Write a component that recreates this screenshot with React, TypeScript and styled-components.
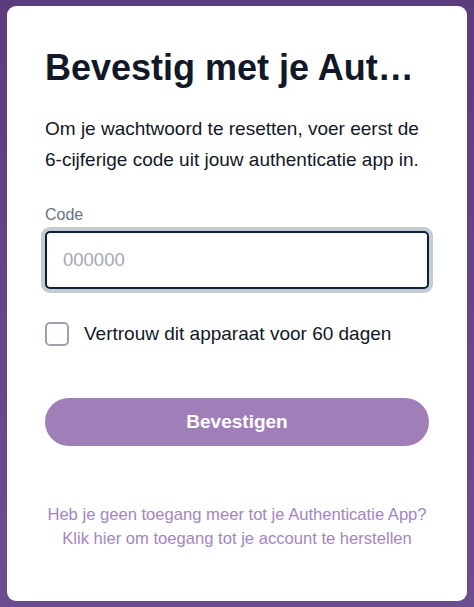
import styled, { createGlobalStyle } from "styled-components";

const GlobalStyle = createGlobalStyle`
  html, body {
    margin: 0;
    padding: 0;
    height: 100%;
  }
  body {
    font-family: "Liberation Sans", Arial, sans-serif;
    background: linear-gradient(180deg, #5c3d7b 0%, #6c4d90 100%);
  }
`;

const Page = styled.div`
  box-sizing: border-box;
  width: 474px;
  height: 607px;
  padding: 6px 7px;
`;

const Card = styled.div`
  box-sizing: border-box;
  height: 100%;
  background: #ffffff;
  border-radius: 9px;
  padding: 42px 38px 0 38px;
  display: flex;
  flex-direction: column;
`;

const Title = styled.h1`
  margin: 0;
  font-size: 36px;
  line-height: 40px;
  font-weight: 700;
  color: #111827;
  white-space: nowrap;
  overflow: hidden;
  text-overflow: ellipsis;
`;

const Intro = styled.p`
  margin: 25px 0 0 0;
  font-size: 19px;
  line-height: 31px;
  color: #111827;
`;

const Field = styled.div`
  display: flex;
  flex-direction: column;
  margin-top: 30px;
`;

const Label = styled.label`
  font-size: 16px;
  line-height: 20px;
  color: #6b7280;
  margin-bottom: 6px;
`;

const Input = styled.input`
  box-sizing: border-box;
  width: 100%;
  height: 58px;
  border: 2px solid #0d1f3c;
  border-radius: 5px;
  box-shadow: 0 0 0 4px #c3cbd3;
  padding: 0 16px;
  font-family: inherit;
  font-size: 18.5px;
  color: #111827;
  outline: none;

  &::placeholder {
    color: #a3a9b2;
  }
`;

const CheckRow = styled.label`
  display: flex;
  align-items: center;
  gap: 15px;
  margin-top: 33px;
  font-size: 19px;
  line-height: 24px;
  color: #111827;
`;

const Box = styled.span`
  box-sizing: border-box;
  width: 24px;
  height: 24px;
  border: 2px solid #9ca3af;
  border-radius: 5px;
  flex-shrink: 0;
`;

const Button = styled.button`
  margin-top: 52px;
  height: 48px;
  width: 100%;
  border: none;
  border-radius: 24px;
  background: #a07fb8;
  color: #ffffff;
  font-family: inherit;
  font-size: 19px;
  font-weight: 700;
  padding: 0;
`;

const Help = styled.a`
  display: block;
  margin-top: 57px;
  text-align: center;
  font-size: 16.6px;
  line-height: 24px;
  color: #a585bf;
  text-decoration: none;
  white-space: nowrap;
`;

export default function App() {
  return (
    <>
      <GlobalStyle />
      <Page>
        <Card>
          <Title>Bevestig met je Authenticatie App</Title>
          <Intro>
            Om je wachtwoord te resetten, voer eerst de 6-cijferige code uit
            jouw authenticatie app in.
          </Intro>
          <Field>
            <Label>Code</Label>
            <Input placeholder="000000" />
          </Field>
          <CheckRow>
            <Box />
            Vertrouw dit apparaat voor 60 dagen
          </CheckRow>
          <Button>Bevestigen</Button>
          <Help href="#">
            Heb je geen toegang meer tot je Authenticatie App?
            <br />
            Klik hier om toegang tot je account te herstellen
          </Help>
        </Card>
      </Page>
    </>
  );
}
